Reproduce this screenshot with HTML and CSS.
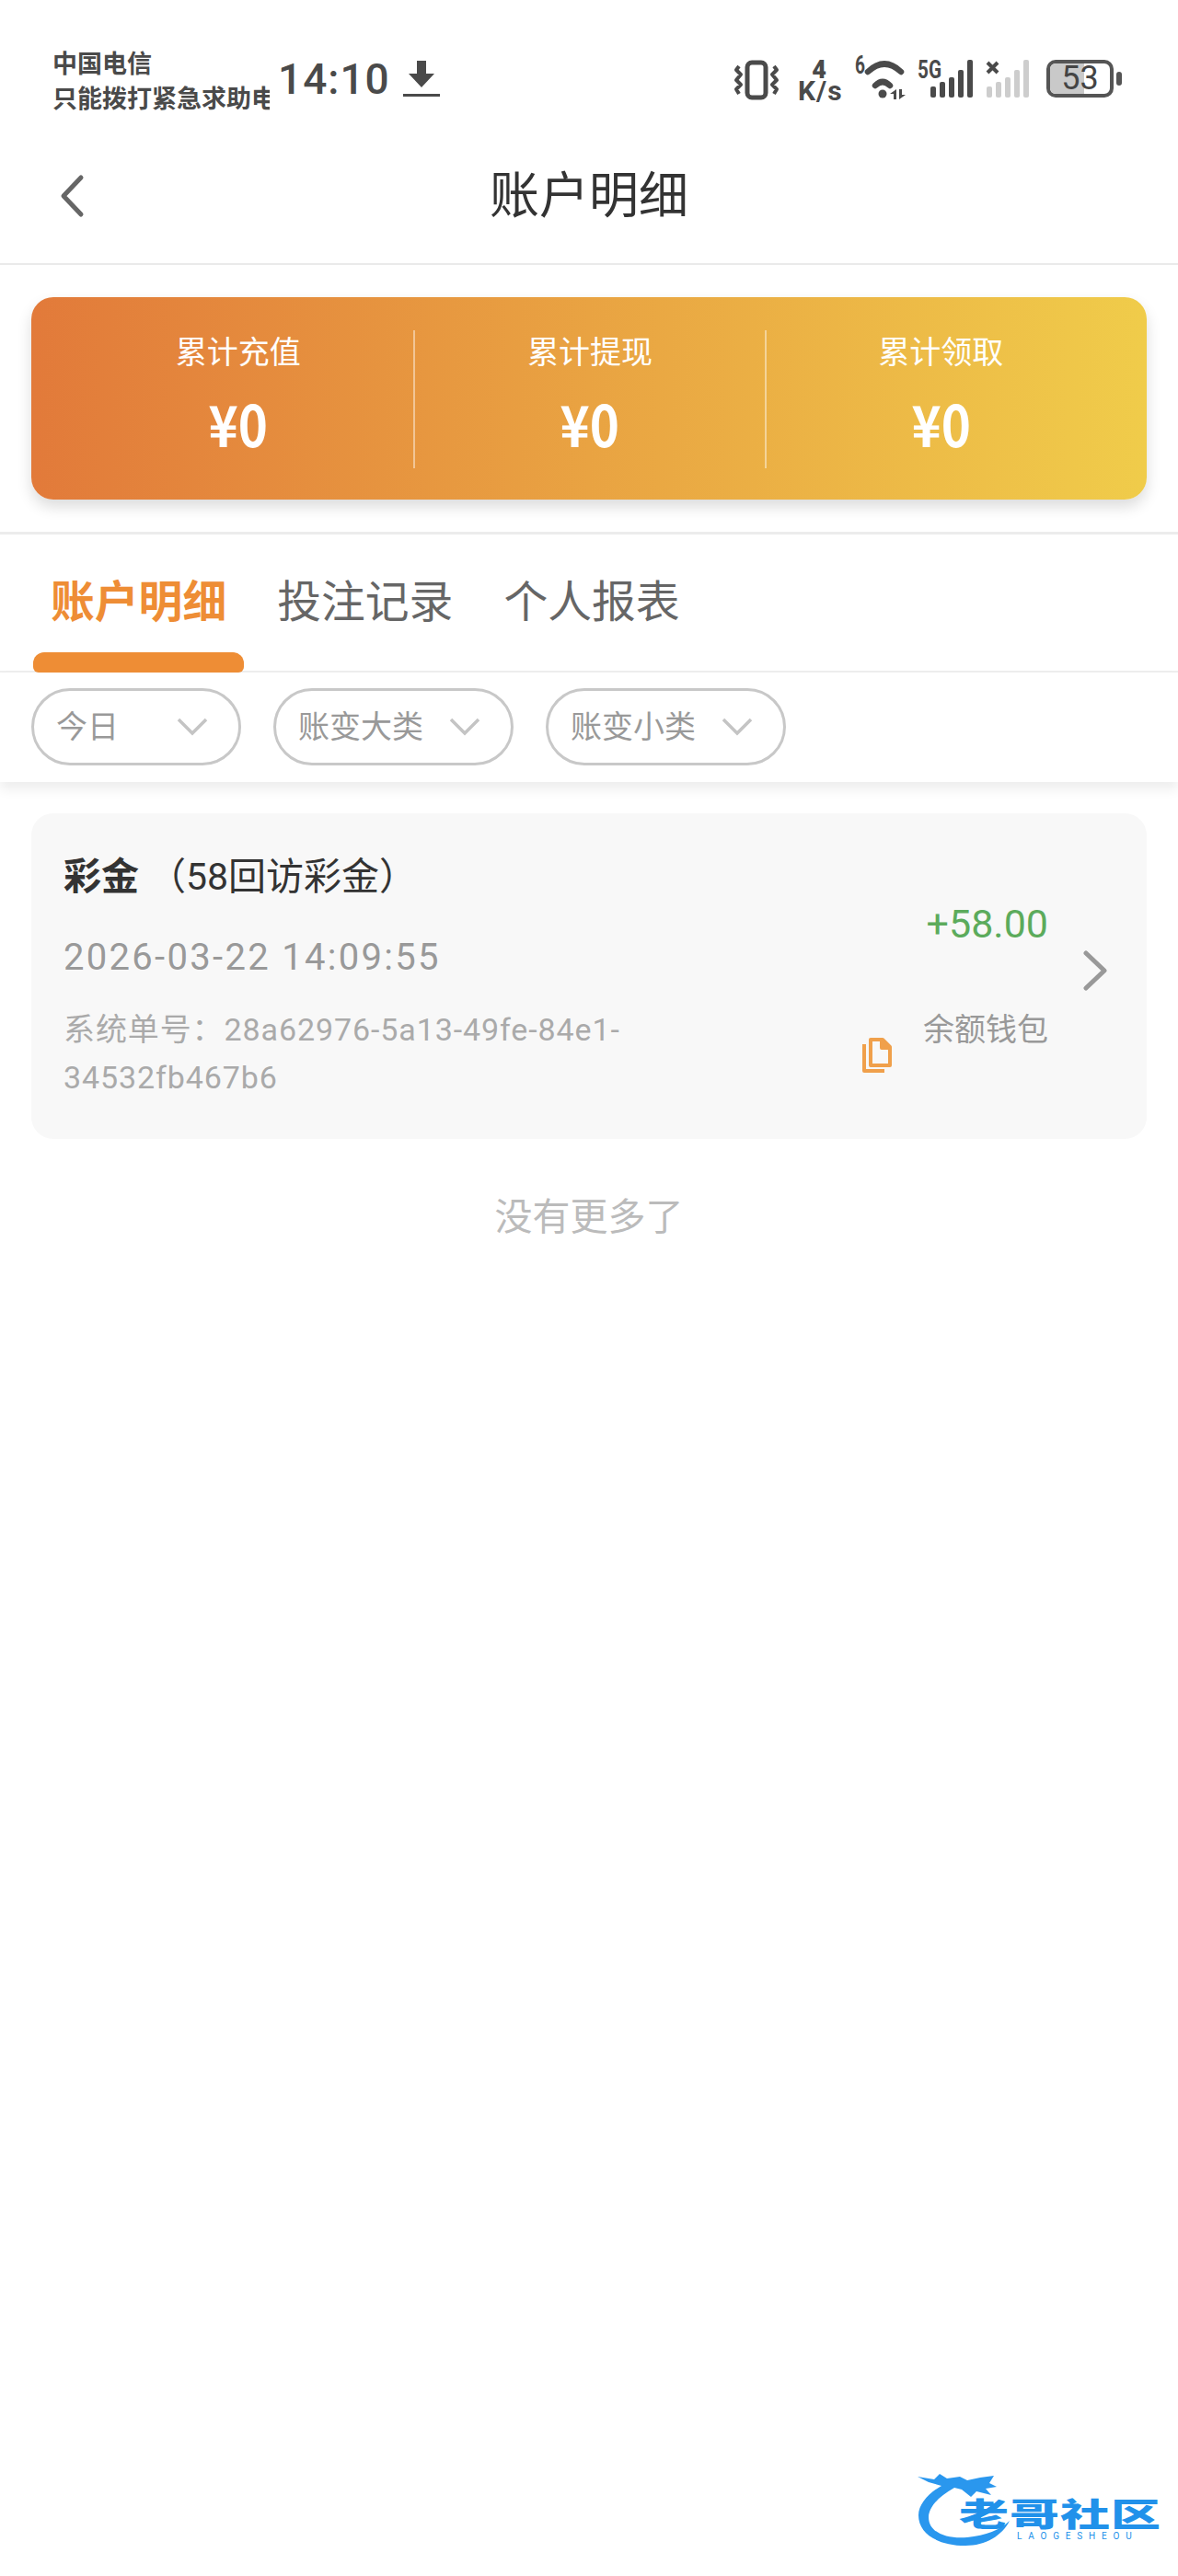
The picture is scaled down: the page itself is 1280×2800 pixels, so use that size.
FILE: index.html
```html
<!DOCTYPE html>
<html lang="zh-CN">
<head>
  <meta charset="UTF-8" />
  <meta name="viewport" content="width=device-width, initial-scale=1.0"/>
  <title>账户明细</title>
  <link rel="stylesheet" href="styles.css">
</head>
<body>

  <!-- STATUS BAR -->
  <div class="status-bar">
    <div class="carrier">
      <div>中国电信</div>
      <div>只能拨打紧急求助电话</div>
    </div>
    <span class="clock">14:10</span>
    <svg class="icon-download" viewBox="0 0 40 40">
      <path d="M15 0h10v14h9L20 29 6 14h9z"/>
      <rect x="0" y="36" width="40" height="3"/>
    </svg>
    <div class="status-icons">
      <svg class="icon-vibrate" width="48" height="44" viewBox="0 0 48 44">
        <rect x="14" y="3" width="20" height="38" rx="5"/>
        <path d="M5 7l-3 4 5 5-5 6 5 5-5 5 3 5M43 7l3 4-5 5 5 6-5 5 5 5-3 5"/>
      </svg>
      <div class="net-speed"><b>4</b><span>K/s</span></div>
      <svg class="icon-wifi" width="56" height="44" viewBox="0 0 56 44">
        <text x="0" y="15" textLength="11" lengthAdjust="spacingAndGlyphs">6</text>
        <path class="arc" d="M14 13Q32-4 50 13"/>
        <path class="arc" d="M22 28Q30 20 38 28"/>
        <circle cx="30" cy="37" r="4.500"/>
        <path d="M45 32v11h-3v-6h-4zM48 32h3v6h4l-7 5z"/>
      </svg>
      <svg class="icon-signal" width="62" height="44" viewBox="0 0 62 44">
        <text x="0" y="20" textLength="26" lengthAdjust="spacingAndGlyphs">5G</text>
        <rect x="14" y="29" width="6" height="12" rx="2"/>
        <rect x="24" y="24" width="6" height="17" rx="2"/>
        <rect x="34" y="19" width="6" height="22" rx="2"/>
        <rect x="44" y="11" width="6" height="30" rx="2"/>
        <rect x="54" y="0" width="6" height="41" rx="2"/>
      </svg>
      <svg class="icon-signal off" width="48" height="44" viewBox="0 0 48 44">
        <path class="cross" d="M2 3l11 11M13 3L2 14"/>
        <rect x="1" y="29" width="6" height="12" rx="2"/>
        <rect x="11" y="24" width="6" height="17" rx="2"/>
        <rect x="21" y="19" width="6" height="22" rx="2"/>
        <rect x="31" y="11" width="6" height="30" rx="2"/>
        <rect x="41" y="0" width="6" height="41" rx="2"/>
      </svg>
      <div class="battery">
        <div class="battery-body">
          <div class="battery-fill"></div>
          <span>53</span>
        </div>
        <div class="battery-nub"></div>
      </div>
    </div>
  </div>

  <!-- NAV -->
  <header class="nav-bar">
    <svg class="back-icon" viewBox="0 0 28 48">
      <path d="M24 4L5 24l19 20"/>
    </svg>
    <h1>账户明细</h1>
  </header>

  <!-- TOTALS -->
  <section class="summary-wrap">
    <div class="summary-card">
      <div class="summary-item">
        <div class="summary-label">累计充值</div>
        <div class="summary-value">¥0</div>
      </div>
      <div class="summary-item">
        <div class="summary-label">累计提现</div>
        <div class="summary-value">¥0</div>
      </div>
      <div class="summary-item">
        <div class="summary-label">累计领取</div>
        <div class="summary-value">¥0</div>
      </div>
    </div>
  </section>

  <!-- TABS -->
  <nav class="tabs">
    <div class="tab active">账户明细</div>
    <div class="tab">投注记录</div>
    <div class="tab">个人报表</div>
  </nav>

  <!-- FILTERS -->
  <div class="filters">
    <div class="filter-pill"><span>今日</span><svg viewBox="0 0 34 20"><path d="M2 2l15 15L32 2"/></svg></div>
    <div class="filter-pill"><span>账变大类</span><svg viewBox="0 0 34 20"><path d="M2 2l15 15L32 2"/></svg></div>
    <div class="filter-pill"><span>账变小类</span><svg viewBox="0 0 34 20"><path d="M2 2l15 15L32 2"/></svg></div>
  </div>

  <!-- RECORDS -->
  <div class="main-content">
    <div class="record-card">
      <div class="record-left">
        <div class="record-title"><b>彩金</b><span>（58回访彩金）</span></div>
        <div class="record-time">2026-03-22 14:09:55</div>
        <div class="record-order">系统单号：28a62976-5a13-49fe-84e1-34532fb467b6</div>
      </div>
      <svg class="copy-icon" viewBox="0 0 32 38">
        <path class="copy-back" d="M2 7v29h22"/>
        <path class="copy-front" d="M9 2h13l8 8v20H9zM21 2v9h9"/>
        <path class="copy-corner" d="M21 2l9 9h-9z"/>
      </svg>
      <div class="record-right">
        <div class="record-amount">+58.00</div>
        <div class="record-wallet">余额钱包</div>
      </div>
      <svg class="chevron" viewBox="0 0 28 44">
        <path d="M3 3l20 19L3 41"/>
      </svg>
    </div>
    <div class="no-more">没有更多了</div>
  </div>

  <!-- WATERMARK -->
  <div class="watermark">
    <svg class="dragon" viewBox="0 0 140 92">
      <path d="M2 6L20 9l6-6 8 5 14-2 8 4 14-3 15-2-5 8 8 4-12 2 6 7-16-4-6 6-10-8-8-2C24 28 14 40 14 50c0 18 22 24 42 22 20-2 36-8 46-18-8 16-26 27-48 27C24 81 3 68 3 48c0-12 11-24 25-32l-14-4z"/>
    </svg>
    <div class="wm-name">老哥社区</div>
    <div class="wm-sub">LAOGESHEOU</div>
  </div>

</body>
</html>
```

FILE: styles.css
```css
html, body {
  margin: 0; padding: 0;
  font-family: 'Noto Sans CJK SC', 'Roboto', sans-serif;
  background: #fff;
  color: #333;
  min-height: 2800px;
}
body { position: relative; overflow: hidden; }

/* status bar */
.status-bar {
  height: 140px;
  display: flex;
  align-items: flex-start;
  padding: 0 61px 0 57px;
  box-sizing: border-box;
  color: #4a4a4a;
}
.carrier {
  width: 236px;
  margin-top: 49px;
  overflow: hidden;
  white-space: nowrap;
  font-size: 27px;
  line-height: 38px;
  font-weight: 700;
}
.clock {
  margin: 56px 0 0 9px;
  font-family: 'Roboto', sans-serif;
  font-size: 46px;
  font-weight: 500;
  line-height: 60px;
  letter-spacing: 1px;
}
.icon-download {
  width: 40px;
  height: 40px;
  margin: 66px 0 0 14px;
  fill: #4a4a4a;
}
.status-icons {
  margin: 65px 0 0 auto;
  display: flex;
  align-items: flex-start;
}
.status-icons svg { display: block; fill: #4a4a4a; overflow: visible; }
.icon-vibrate rect, .icon-vibrate path { fill: none; stroke: #4a4a4a; stroke-width: 5; }
.icon-vibrate path { stroke-width: 4; stroke-linejoin: round; }
.status-icons text {
  font-family: 'Roboto', sans-serif;
  font-weight: 700;
  font-size: 27px;
  fill: #4a4a4a;
}
.net-speed {
  width: 46px;
  margin-left: 21px;
  text-align: center;
  font-family: 'Roboto', sans-serif;
  font-weight: 700;
  color: #4a4a4a;
}
.net-speed b { display: block; font-size: 27px; line-height: 22px; }
.net-speed span { display: block; font-size: 30px; line-height: 24px; letter-spacing: 1px; white-space: nowrap; }
.icon-wifi { margin-left: 16px; }
.icon-wifi .arc { fill: none; stroke: #4a4a4a; stroke-width: 6.500; stroke-linecap: round; }
.icon-signal { margin-left: 12px; }
.icon-signal.off { margin-left: 12px; }
.icon-signal.off rect { fill: #cdcdcd; }
.icon-signal .cross { fill: none; stroke: #4a4a4a; stroke-width: 4; }
.battery { display: flex; align-items: center; margin-left: 18px; }
.battery-body {
  position: relative;
  width: 73px;
  height: 41px;
  box-sizing: border-box;
  border: 4px solid #555;
  border-radius: 10px;
  overflow: hidden;
  text-align: center;
  font-family: 'Roboto', sans-serif;
  font-size: 36px;
  line-height: 33px;
  color: #444;
}
.battery-fill {
  position: absolute;
  left: 0; top: 0; bottom: 0;
  width: 57%;
  background: #c9c9c9;
}
.battery-body span { position: relative; }
.battery-nub {
  width: 6px;
  height: 15px;
  margin-left: 3px;
  border-radius: 3px;
  background: #555;
}

/* nav */
.nav-bar {
  height: 148px;
  box-sizing: border-box;
  border-bottom: 2px solid #eaeaea;
  display: flex;
  align-items: center;
  justify-content: center;
  position: relative;
}
.nav-bar h1 {
  margin: 0 0 10px 0;
  font-size: 54px;
  font-weight: 400;
  color: #333;
}
.back-icon {
  position: absolute;
  left: 64px;
  top: 49px;
  width: 28px;
  height: 48px;
  fill: none;
  stroke: #666;
  stroke-width: 5;
  stroke-linecap: round;
  stroke-linejoin: round;
}

/* totals */
.summary-wrap {
  padding: 35px 34px;
  border-bottom: 3px solid #ececec;
}
.summary-card {
  height: 220px;
  box-sizing: border-box;
  padding: 36px 34px 0;
  border-radius: 24px;
  background: linear-gradient(90deg, #e27a3a, #f0cc4a);
  box-shadow: 0 8px 16px rgba(0,0,0,0.14);
  display: grid;
  grid-template-columns: repeat(3, 1fr);
  color: #fff;
  text-align: center;
}
.summary-item { border-left: 2px solid rgba(255,255,255,0.45); height: 150px; }
.summary-item:first-child { border-left: none; }
.summary-label {
  font-size: 34px;
  line-height: 44px;
}
.summary-value {
  margin-top: 24px;
  font-size: 62px;
  line-height: 64px;
  font-weight: 700;
  transform: scaleX(0.88);
}

/* tabs */
.tabs {
  height: 150px;
  box-sizing: border-box;
  display: flex;
  gap: 55px;
  padding: 0 0 0 55px;
  border-bottom: 2px solid #eee;
}
.tab {
  position: relative;
  font-size: 47.800px;
  line-height: 140px;
  color: #666;
}
.tab.active { color: #ee8d35; font-weight: 700; }
.tab.active::after {
  content: '';
  position: absolute;
  left: -19px;
  right: -19px;
  bottom: -2px;
  height: 22px;
  background: #ee8d35;
  border-radius: 12px 12px 6px 6px;
}

/* filters */
.filters {
  height: 119px;
  box-sizing: border-box;
  padding: 17px 34px 0;
  display: flex;
  gap: 35px;
  align-items: flex-start;
  box-shadow: 0 8px 12px rgba(0,0,0,0.07);
}
.filter-pill {
  width: 261px;
  height: 84px;
  box-sizing: border-box;
  border: 3px solid #c8c8c8;
  border-radius: 42px;
  padding: 0 33px 0 24px;
  display: flex;
  align-items: center;
  justify-content: space-between;
  font-size: 34px;
  color: #999;
}
.filter-pill span { margin-bottom: 6px; }
.filter-pill:first-child { width: 228px; }
.filter-pill svg {
  width: 34px;
  height: 20px;
  fill: none;
  stroke: #c4c4c4;
  stroke-width: 3.500;
}

/* records */
.main-content { padding: 34px 34px 0; }
.record-card {
  height: 354px;
  box-sizing: border-box;
  background: #f8f8f8;
  border-radius: 24px;
  padding: 0 107px 0 35px;
  display: flex;
  position: relative;
}
.record-left { width: 660px; flex-shrink: 0; padding-top: 38px; }
.record-title {
  font-family: 'Roboto', 'Noto Sans CJK SC', sans-serif;
  font-size: 41px;
  line-height: 62px;
  color: #333;
}
.record-title b { font-weight: 700; }
.record-title span { margin-left: 10px; }
.record-time {
  margin-top: 29px;
  font-family: 'Roboto', sans-serif;
  font-size: 40px;
  line-height: 56px;
  letter-spacing: 2.300px;
  color: #999;
}
.record-order {
  margin-top: 24px;
  font-family: 'Roboto', 'Noto Sans CJK SC', sans-serif;
  font-size: 34px;
  line-height: 52px;
  letter-spacing: 0.900px;
  color: #aaa;
}
.copy-icon {
  width: 32px;
  height: 38px;
  margin: 244px 0 0 208px;
  flex-shrink: 0;
  fill: none;
  stroke: #f0a04b;
  stroke-width: 4;
  stroke-linejoin: round;
}
.copy-icon .copy-corner { fill: #f0a04b; stroke: none; }
.record-right {
  margin-left: auto;
  padding-top: 90px;
  text-align: right;
}
.record-amount {
  font-family: 'Roboto', sans-serif;
  font-size: 43px;
  line-height: 60px;
  color: #5cab5c;
}
.record-wallet {
  margin-top: 59px;
  font-size: 34px;
  line-height: 48px;
  color: #999;
}
.chevron {
  position: absolute;
  right: 41px;
  top: 149px;
  width: 28px;
  height: 44px;
  fill: none;
  stroke: #999;
  stroke-width: 5;
  stroke-linecap: round;
  stroke-linejoin: round;
}
.no-more {
  margin-top: 52px;
  text-align: center;
  font-size: 41px;
  line-height: 58px;
  color: #bbb;
}

/* watermark */
.watermark {
  position: absolute;
  left: 995px;
  top: 2686px;
  width: 270px;
  height: 90px;
  color: #2191ea;
}
.dragon { position: absolute; left: 0; top: 0; width: 140px; height: 92px; fill: #2a97ee; }
.wm-name {
  position: absolute;
  left: 47px;
  top: 23px;
  font-size: 54px;
  line-height: 44px;
  font-weight: 900;
  letter-spacing: 1px;
  white-space: nowrap;
  transform: scaleY(0.66);
  transform-origin: left center;
}
.wm-sub {
  position: absolute;
  left: 110px;
  top: 66px;
  font-family: 'Roboto', sans-serif;
  font-size: 10px;
  line-height: 10px;
  letter-spacing: 6.800px;
  white-space: nowrap;
}
```
